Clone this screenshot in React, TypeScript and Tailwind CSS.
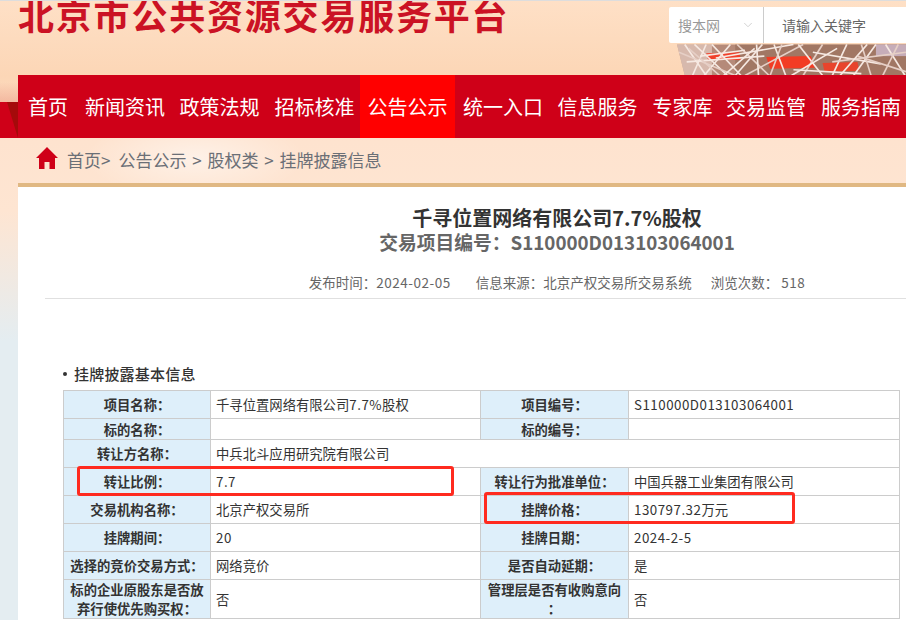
import type { ReactNode } from 'react'
import { ChevronDown } from 'lucide-react'

const navItems = [
  { label: '首页', w: 'w-[58px] mr-[3px]' },
  { label: '新闻资讯', w: 'w-[90px]' },
  { label: '政策法规', w: 'w-[99px]' },
  { label: '招标核准', w: 'w-[91px]' },
  { label: '公告公示', w: 'w-[95px]', active: true },
  { label: '统一入口', w: 'w-[96px]' },
  { label: '信息服务', w: 'w-[93px]' },
  { label: '专家库', w: 'w-[77px]' },
  { label: '交易监管', w: 'w-[90px]' },
  { label: '服务指南', w: 'w-[100px]' },
]

// strands of the stadium picture behind the search box
const strands = [
  [8, 0, 30, 32], [18, 0, 52, 32], [2, 8, 60, 32], [30, 0, 16, 32], [55, 0, 28, 32], [62, 0, 95, 32],
  [88, 0, 60, 32], [40, 14, 120, 0], [70, 32, 130, 0], [100, 0, 112, 32], [125, 0, 150, 32],
  [150, 0, 130, 32], [140, 8, 210, 20], [175, 0, 160, 32], [190, 0, 200, 32], [205, 0, 182, 32],
  [215, 0, 235, 32], [228, 0, 212, 32], [120, 26, 190, 30], [10, 18, 90, 12], [160, 18, 236, 8],
  [82, 0, 84, 32], [48, 32, 80, 4], [12, 4, 44, 32], [24, 12, 70, 6], [36, 0, 66, 32],
  [108, 0, 96, 32], [118, 32, 165, 4], [168, 32, 196, 0], [186, 12, 236, 28],
]

function Nest() {
  return (
    <svg className="absolute left-[677px] top-[43px]" width="229" height="32" viewBox="0 0 236 32">
      <polygon points="0,0 236,0 236,32 8,32" fill="#b58a79" />
      <polygon points="60,0 236,0 236,32 60,32" fill="#8f6753" opacity="0.55" />
      <polygon points="205,0 236,0 236,12 205,12" fill="#cdb6c8" opacity="0.85" />
      <polygon points="0,0 36,0 36,32 8,32" fill="#eed8d0" opacity="0.6" />
      <polygon points="30,9 64,8 66,16 32,16" fill="#f0402a" />
      <polygon points="92,13 138,12 142,24 96,25" fill="#f23c24" />
      <polygon points="150,19 186,18 188,27 152,28" fill="#e8442c" />
      {strands.map((s, i) => (
        <line key={i} x1={s[0]} y1={s[1]} x2={s[2]} y2={s[3]} stroke={i % 3 === 2 ? '#e6cfc6' : '#f6e9e2'} strokeWidth="1.7" />
      ))}
    </svg>
  )
}

function L({ children }: { children: ReactNode }) {
  return <span className="tracking-[0.5px]">{children}</span>
}

function Row({ h, cells }: { h: string; cells: [string, ReactNode, string?, ReactNode?] }) {
  return (
    <tr className={h}>
      <th className="border border-[#ccc] bg-[#deeffa] px-[2px] py-0 text-center font-bold">{cells[0]}</th>
      <td className="border border-[#ccc] px-[5px] py-0">{cells[1]}</td>
      <th className="border border-[#ccc] bg-[#deeffa] px-[2px] py-0 text-center font-bold">{cells[2]}</th>
      <td className="border border-[#ccc] px-[5px] py-0">{cells[3]}</td>
    </tr>
  )
}

export default function App() {
  return (
    <div className="relative w-[906px] h-[620px] overflow-hidden border-t border-[#ddd] bg-[linear-gradient(180deg,#fee0c6_0px,#fcd6b6_75px,#fee3cf_140px,#fee5d2_210px,#e4edf1_340px,#e4edf1_100%)] font-['Noto_Sans_CJK_SC',sans-serif] text-[#333]">
      {/* Header */}
      <header className="flex h-[74px] justify-between">
        <h1 className="ml-[18px] -mt-[2px] h-[30px] text-[36px] leading-[30px] font-bold tracking-[1.8px] text-[#cb1224]">
          北京市公共资源交易服务平台
        </h1>
        <div className="mt-[6px] flex h-[36px] w-[237px] rounded-l-[2px] bg-white text-[14px] leading-[36px]">
          <div className="flex w-[95px] items-center justify-between border-r border-[#ccc] pl-[9px] pr-[8px] text-[#999]">
            搜本网
            <ChevronDown className="h-[14px] w-[14px] text-[#ccc]" strokeWidth={1.5} />
          </div>
          <div className="pl-[18px] text-[#666]">请输入关键字</div>
        </div>
      </header>
      <Nest />

      {/* Nav */}
      <div className="absolute left-0 top-[81px] h-[20px] w-[18px] bg-[linear-gradient(180deg,transparent,rgba(225,120,100,0.35))]" />
      <div className="absolute left-0 top-[101px] h-[36px] w-[18px] bg-[#cf0018]">
        <svg width="18" height="36" viewBox="0 0 18 36">
          <polygon points="7,0 18,0 18,36" fill="#a50a0a" />
        </svg>
      </div>
      <nav className="relative ml-[18px] flex h-[63px] bg-[#cf0018] pl-[1px] text-[20px] leading-[63px] text-white">
        {navItems.map((n) => (
          <a key={n.label} className={n.active ? `${n.w} shrink-0 bg-[#ff0000] text-center` : `${n.w} shrink-0 text-center`}>
            {n.label}
          </a>
        ))}
      </nav>

      {/* Breadcrumb */}
      <div className="flex h-[45px] items-center bg-[radial-gradient(ellipse_110px_40px_at_195px_20px,rgba(255,255,255,0.5),transparent)] pb-[2px] pl-[36px] text-[17px] text-[#6b6f76]">
        <svg className="mr-[9px] -mt-[3px]" width="22" height="22" viewBox="0 0 22 22">
          <path d="M11 0 L22 11 L19 11 L19 22 L13.5 22 L13.5 15 L8.5 15 L8.5 22 L3 22 L3 11 L0 11 Z" fill="#cf0018" />
        </svg>
        <span>首页&gt;</span>
        <span className="ml-[8px] [word-spacing:2px]">公告公示 &gt; 股权类 &gt; 挂牌披露信息</span>
      </div>

      {/* Content */}
      <main className="relative ml-[18px] h-[450px] w-[888px] border-t-4 border-[#e0b883] bg-white">
        <div className="ml-[27px] w-[1024px]">
          <div className="h-[112px] border-b border-[#e0e0e0] pt-[18px] text-center">
            <h2 className="text-[20px] leading-[25px] font-bold text-[#333]">千寻位置网络有限公司7.7%股权</h2>
            <h3 className="text-[18.75px] leading-[24px] font-bold text-[#666]">交易项目编号：S110000D013103064001</h3>
            <p className="mt-[18px] flex justify-center text-[13.5px] leading-[20px] text-[#666]">
              <span>发布时间：<L>2024-02-05</L></span>
              <span className="ml-[25px]">信息来源：北京产权交易所交易系统</span>
              <span className="ml-[19px]">浏览次数： <L>518</L></span>
            </p>
          </div>
          <div className="relative pl-[18px]">
            <h4 className="mt-[64px] mb-[5px] flex h-[22px] items-center gap-[7px] text-[15px] font-medium tracking-[0.2px]">
              <span className="h-[4px] w-[4px] rounded-full bg-[#333]" />
              挂牌披露基本信息
            </h4>
            <table className="w-[836px] table-fixed border-collapse text-[13.33px] leading-[19px] text-[#333]">
              <colgroup>
                <col className="w-[147px]" />
                <col className="w-[270px]" />
                <col className="w-[148px]" />
                <col className="w-[271px]" />
              </colgroup>
              <tbody>
                <Row h="h-[28px]" cells={['项目名称：', <>千寻位置网络有限公司<L>7.7%</L>股权</>, '项目编号：', <L>S110000D013103064001</L>]} />
                <Row h="h-[21px]" cells={['标的名称：', '', '标的编号：', '']} />
                <tr className="h-[28px]">
                  <th className="border border-[#ccc] bg-[#deeffa] px-[2px] py-0 text-center font-bold">转让方名称：</th>
                  <td colSpan={3} className="border border-[#ccc] px-[5px] py-0">中兵北斗应用研究院有限公司</td>
                </tr>
                <Row h="h-[28px]" cells={['转让比例：', <L>7.7</L>, '转让行为批准单位：', '中国兵器工业集团有限公司']} />
                <Row h="h-[28px]" cells={['交易机构名称：', '北京产权交易所', '挂牌价格：', <><L>130797.32</L>万元</>]} />
                <Row h="h-[28px]" cells={['挂牌期间：', <L>20</L>, '挂牌日期：', <L>2024-2-5</L>]} />
                <Row h="h-[28px]" cells={['选择的竞价交易方式：', '网络竞价', '是否自动延期：', '是']} />
                <tr className="h-[38px]">
                  <th className="border border-[#ccc] bg-[#deeffa] px-[4px] py-0 text-center font-bold">标的企业原股东是否放弃行使优先购买权：</th>
                  <td className="border border-[#ccc] px-[5px] py-0">否</td>
                  <th className="border border-[#ccc] bg-[#deeffa] px-[2px] py-0 text-center font-bold">
                    管理层是否有收购意向
                    <br />：
                  </th>
                  <td className="border border-[#ccc] px-[5px] py-0">否</td>
                </tr>
              </tbody>
            </table>
          </div>
        </div>
        {/* Hand-drawn highlights over the table */}
        <div className="absolute left-[59px] top-[279px] h-[30px] w-[377px] rounded-[3px] border-[3px] border-[#ff2a1f]" />
        <div className="absolute left-[466px] top-[305px] h-[32px] w-[311px] rounded-[3px] border-[3px] border-[#ff2a1f]" />
      </main>
    </div>
  )
}
